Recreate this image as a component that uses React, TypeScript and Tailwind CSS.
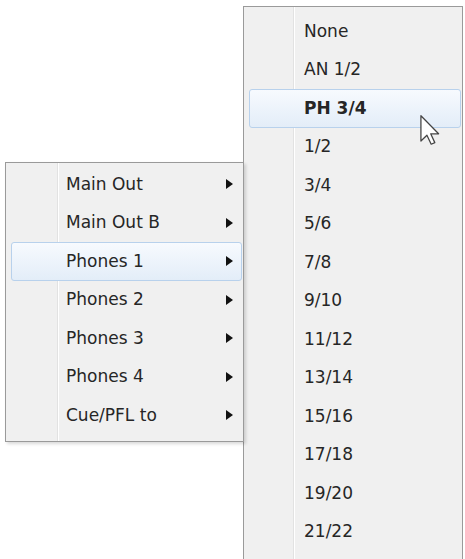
import React from 'react';

const outputs = ['Main Out', 'Main Out B', 'Phones 1', 'Phones 2', 'Phones 3', 'Phones 4', 'Cue/PFL to'];
const sources = [
  'None',
  'AN 1/2',
  'PH 3/4',
  '1/2',
  '3/4',
  '5/6',
  '7/8',
  '9/10',
  '11/12',
  '13/14',
  '15/16',
  '17/18',
  '19/20',
  '21/22',
];

const font = { fontFamily: '"DejaVu Sans", Verdana, sans-serif' };

const Highlight = () => (
  <div className="absolute inset-y-0 left-[5px] right-[1px] rounded-[3px] border border-[#b8d1ec] bg-gradient-to-b from-[#f7fafe] to-[#e3edf8]" />
);

const Arrow = () => (
  <svg width="7" height="10" viewBox="0 0 7 10" className="relative">
    <path d="M0 0 L7 5 L0 10 Z" fill="#111" />
  </svg>
);

const Cursor = () => (
  <svg
    width="20"
    height="30"
    viewBox="0 0 12.5 19"
    className="absolute left-[420px] top-[115px]"
  >
    <path
      d="M0.5 0.5 L0.5 16.5 L4.3 12.8 L7 18.5 L9.3 17.5 L6.7 11.9 L11.7 11.9 Z"
      fill="#fff"
      stroke="#444"
      strokeWidth="0.8"
      strokeLinejoin="round"
    />
  </svg>
);

export default function App() {
  return (
    <div className="relative h-[559px] w-[465px] overflow-hidden bg-white text-[17px] text-[#262626]" style={font}>
      <div className="flex items-start">
        {/* Output menu */}
        <div className="relative z-10 ml-[5px] mt-[162px] w-[239px] border border-[#9a9a9a] bg-[#f0f0f0] pt-[2px] pb-[6px] shadow-[2px_2px_3px_rgba(0,0,0,0.15)]">
          <div className="absolute bottom-0 left-[51px] top-0 flex">
            <div className="w-px bg-[#e2e2e2]" />
            <div className="w-px bg-white" />
          </div>
          {outputs.map((label) => (
            <div key={label} className="relative flex h-[38.5px] items-center">
              {label === 'Phones 1' && <Highlight />}
              <span className="relative ml-[60px] flex-1">{label}</span>
              <div className="mr-[10px] flex items-center">
                <Arrow />
              </div>
            </div>
          ))}
        </div>

        {/* Source menu */}
        <div className="relative -ml-px mt-[6px] h-[600px] w-[220px] border border-[#9a9a9a] bg-[#f0f0f0] pt-[5px]">
          <div className="absolute bottom-0 left-[49px] top-0 flex">
            <div className="w-px bg-[#e2e2e2]" />
            <div className="w-px bg-white" />
          </div>
          {sources.map((label) => (
            <div key={label} className="relative flex h-[38.5px] items-center">
              {label === 'PH 3/4' && <Highlight />}
              <span className={`relative ml-[60px] ${label === 'PH 3/4' ? 'font-bold' : ''}`}>{label}</span>
            </div>
          ))}
        </div>
      </div>
      <Cursor />
    </div>
  );
}
